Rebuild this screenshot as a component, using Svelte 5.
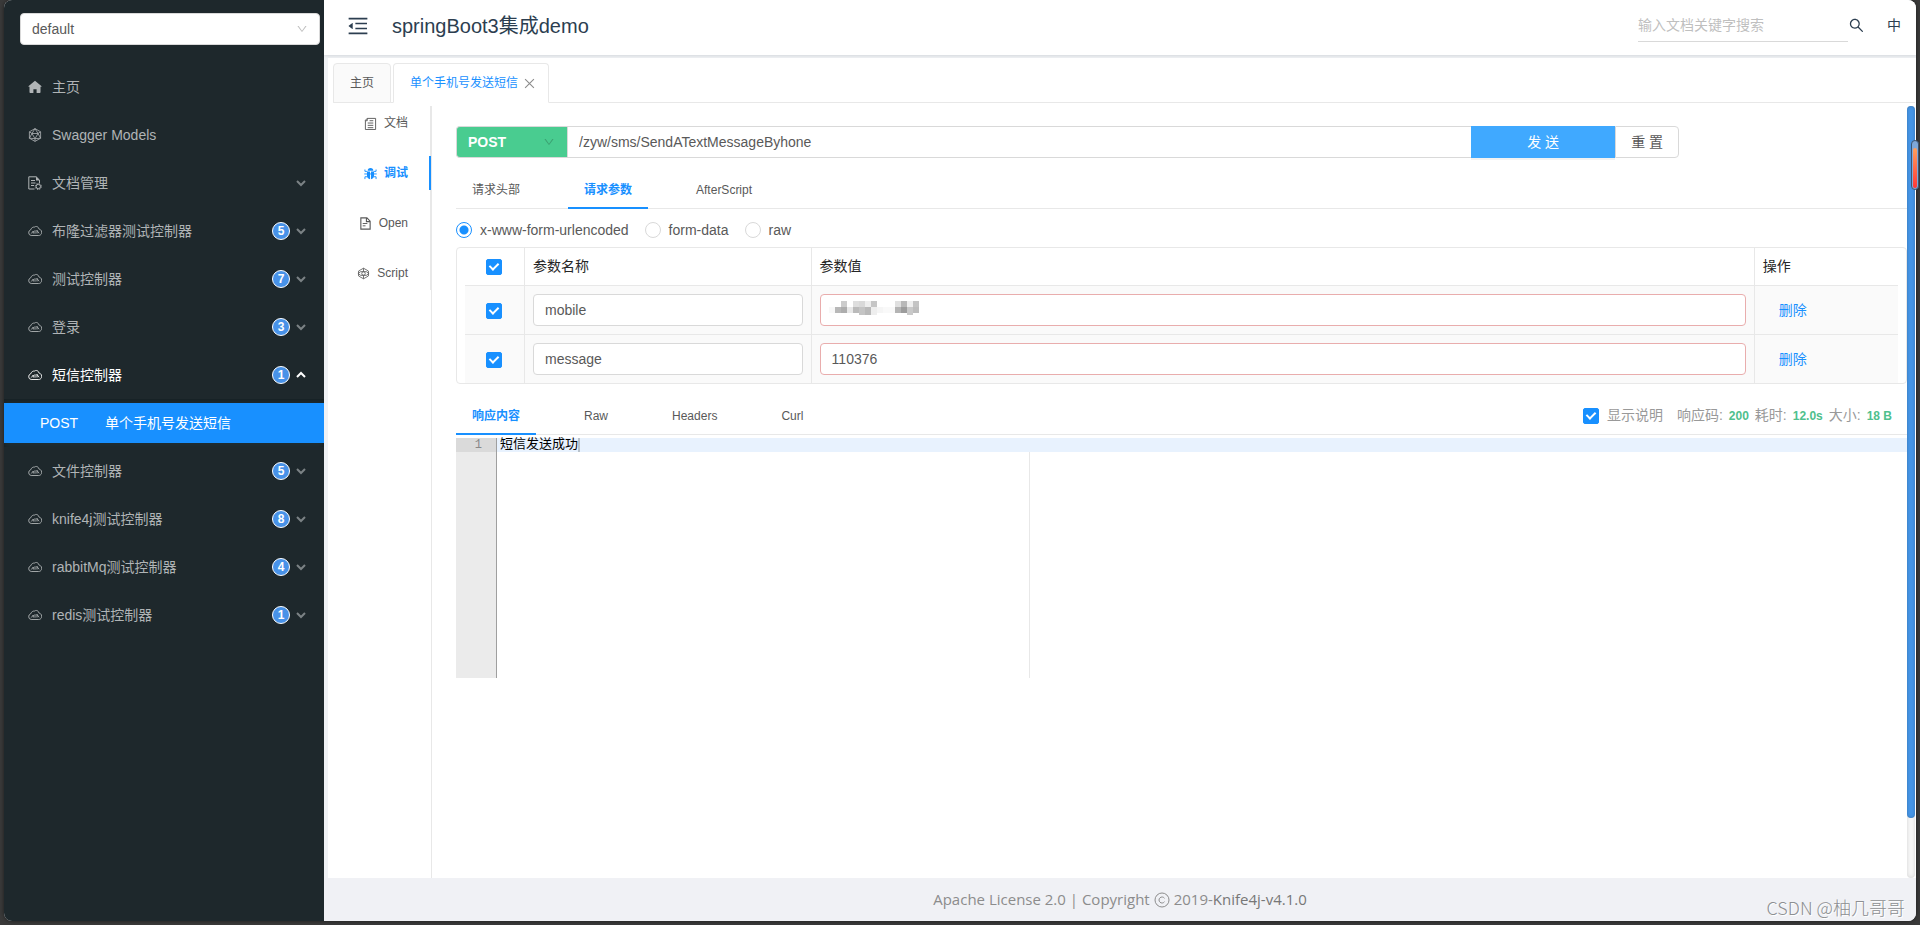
<script>
	const menus = [
		{ title: '主页', icon: 'home' },
		{ title: 'Swagger Models', icon: 'model' },
		{ title: '文档管理', icon: 'docset', arrow: true },
		{ title: '布隆过滤器测试控制器', icon: 'cloud', count: 5, arrow: true },
		{ title: '测试控制器', icon: 'cloud', count: 7, arrow: true },
		{ title: '登录', icon: 'cloud', count: 3, arrow: true },
		{
			title: '短信控制器',
			icon: 'cloud',
			count: 1,
			arrow: true,
			open: true,
			children: [{ method: 'POST', title: '单个手机号发送短信' }]
		},
		{ title: '文件控制器', icon: 'cloud', count: 5, arrow: true },
		{ title: 'knife4j测试控制器', icon: 'cloud', count: 8, arrow: true },
		{ title: 'rabbitMq测试控制器', icon: 'cloud', count: 4, arrow: true },
		{ title: 'redis测试控制器', icon: 'cloud', count: 1, arrow: true }
	];

	const sideTabs = [
		{ title: '文档', icon: 'doc' },
		{ title: '调试', icon: 'bug' },
		{ title: 'Open', icon: 'file' },
		{ title: 'Script', icon: 'script' }
	];

	const requestTabs = ['请求头部', '请求参数', 'AfterScript'];
	const responseTabs = ['响应内容', 'Raw', 'Headers', 'Curl'];
	const bodyTypes = ['x-www-form-urlencoded', 'form-data', 'raw'];

	const stats = [
		{ label: '响应码:', value: '200' },
		{ label: '耗时:', value: '12.0s' },
		{ label: '大小:', value: '18 B' }
	];

	// masked value, 6px blocks: x, y, height, colour
	const mask = [
		[0, 6, 6, '#f8f8f8'],
		[6, 6, 6, '#b8b8b8'],
		[12, 0, 6, '#cccccc'],
		[12, 6, 6, '#adadad'],
		[18, 6, 6, '#e8e8e8'],
		[24, 0, 6, '#dedede'],
		[24, 6, 6, '#bababa'],
		[30, 0, 6, '#d9d9d9'],
		[30, 6, 8, '#c4c4c4'],
		[36, 0, 6, '#eeeeee'],
		[36, 6, 8, '#b9b9b9'],
		[42, 0, 6, '#c6c6c6'],
		[42, 6, 8, '#eeeeee'],
		[48, 6, 6, '#f5f5f5'],
		[54, 6, 6, '#f9f9f9'],
		[60, 6, 6, '#f9f9f9'],
		[66, 0, 6, '#e0e0e0'],
		[66, 6, 6, '#b4b4b4'],
		[72, 0, 6, '#b8b8b8'],
		[72, 6, 6, '#9c9c9c'],
		[78, 0, 6, '#efefef'],
		[78, 6, 8, '#c9c9c9'],
		[84, 0, 6, '#c4c4c4'],
		[84, 6, 6, '#bdbdbd']
	];

	let params = $state([
		{ name: 'mobile', value: '', masked: true, checked: true },
		{ name: 'message', value: '110376', masked: false, checked: true }
	]);

	let sideTab = $state('调试');
	let requestTab = $state('请求参数');
	let responseTab = $state('响应内容');
	let bodyType = $state('x-www-form-urlencoded');
	let url = $state('/zyw/sms/SendATextMessageByhone');
	let allChecked = $state(true);
	let showDesc = $state(true);

	function toggleAll() {
		params.forEach((p) => (p.checked = allChecked));
	}

	function remove(param) {
		params = params.filter((p) => p !== param);
	}
</script>

{#snippet down()}
	<svg class="down" viewBox="0 0 1024 1024" aria-hidden="true">
		<path
			d="M884 256h-75c-5.1 0-9.9 2.5-12.9 6.6L512 654.2 227.9 262.6c-3-4.1-7.8-6.6-12.9-6.6h-75c-6.5 0-10.3 7.4-6.5 12.7l352.6 486.1c12.8 17.6 39 17.6 51.7 0l352.6-486.1c3.9-5.3.1-12.7-6.4-12.7z"
		/>
	</svg>
{/snippet}

{#snippet icon(name)}
	<svg class="icon" viewBox="0 0 14 14" aria-hidden="true">
		{#if name === 'home'}
			<path
				fill="currentColor"
				d="M7 .8 13.3 6a.4.4 0 0 1-.3.8h-.5v5.4c0 .5-.3.8-.8.8H8.6V9.2H5.4V13H2.3c-.5 0-.8-.3-.8-.8V6.8H1A.4.4 0 0 1 .7 6z"
			/>
		{:else if name === 'model'}
			<g fill="none" stroke="currentColor" stroke-width=".8">
				<path d="M7 .6 12.6 3.8v6.4L7 13.4 1.4 10.2V3.8z" />
				<path d="M7 .6 4 5.5h6zM4 5.5 1.4 3.8M10 5.5l2.6-1.7M4 5.5l3 5.2 3-5.2M7 10.7v2.7M4 5.5l-2.6 4.7 5.6.5 5.6-.5L10 5.5" />
			</g>
		{:else if name === 'docset'}
			<g fill="none" stroke="currentColor">
				<path d="M6.5 13H.8V.8h7.4l3.3 3.3V7" />
				<path d="M3 4.5h4M3 7h4.5M3 9.5h3" />
				<circle cx="10.3" cy="10.5" r="2.2" />
				<circle cx="10.3" cy="10.5" r="3.1" stroke-dasharray="1.2 1.23" />
			</g>
			<path fill="currentColor" d="M8 .5v4h4z" />
		{:else if name === 'cloud'}
			<path
				fill="none"
				stroke="currentColor"
				stroke-width=".9"
				d="M3.2 11.5a2.9 2.9 0 0 1-.6-5.6C3.3 3.8 5 2.9 6.7 3c.9-.9 3.7-.8 4.1 1.8 2.7.9 3.3 3 2.7 4.6-.5 1.500-1.7 2.1-2.8 2.1z"
			/>
			<path fill="none" stroke="currentColor" stroke-width=".9" d="M3.3 9.5 5.3 7v2.5M7 9.7V6.200M9 6v3.5M9 6.5l2 2.8" />
		{:else if name === 'doc'}
			<path fill="none" stroke="currentColor" d="M3.5 1.5h9v12h-11V3.5zM1.5 4h2V1.5M4 6.5h6M4 9h6M4 11.500h6M6 4h4" />
		{:else if name === 'bug'}
			<path
				fill="currentColor"
				d="M4 4a3 3 0 0 1 6 0zM3.2 4.8h3.3v8.4C4.5 13 3.2 11.5 3.2 9.5zM7.5 4.8h3.3v4.7c0 2-1.3 3.5-3.3 3.7z"
			/>
			<path fill="none" stroke="currentColor" d="M.3 7.5h13.4M1 2.700v2h2.5M13 2.700v2h-2.5M1 13v-2.500h2.500M13 13v-2.500h-2.500" />
		{:else if name === 'file'}
			<path fill="none" stroke="currentColor" stroke-width="1.2" d="M2 1h6.5L12 4.5V13H2zM8 1v4h4" />
			<path fill="none" stroke="currentColor" d="M4 7h5M4 9.500h3" />
		{:else if name === 'script'}
			<g fill="none" stroke="currentColor" stroke-width=".9">
				<path d="M7 1.3 12.3 4.3v5.4L7 12.7 1.7 9.7V4.3z" />
				<path d="M1 7 4 5h6l3 2-3 2H4z" />
				<circle cx="7" cy="7" r="1.9" />
				<path d="M7 1.3v3.500M7 9.200v3.500" />
			</g>
		{/if}
	</svg>
{/snippet}

{#snippet lineTabs(tabs, active, select)}
	<div class="line-tabs" role="tablist">
		{#each tabs as tab}
			<button role="tab" class:active={tab === active} aria-selected={tab === active} onclick={() => select(tab)}>
				{tab}
			</button>
		{/each}
	</div>
{/snippet}

<div class="desktop">
	<div class="window">
		<aside class="sider">
			<div class="group select">
				<select aria-label="group">
					<option>default</option>
				</select>
				{@render down()}
			</div>

			<nav>
				{#each menus as menu}
					<button class="menu" class:open={menu.open}>
						{@render icon(menu.icon)}
						<span class="title">{menu.title}</span>
						{#if menu.count}
							<span class="badge">{menu.count}</span>
						{/if}
						{#if menu.arrow}
							<svg class="arrow" viewBox="0 0 10 10" aria-hidden="true">
								<path d="M1 3l4 4 4-4" />
							</svg>
						{/if}
					</button>
					{#if menu.children}
						<div class="submenu">
							{#each menu.children as child}
								<a href="#sms"><span class="method">{child.method}</span>{child.title}</a>
							{/each}
						</div>
					{/if}
				{/each}
			</nav>
		</aside>

		<main>
			<header>
				<button class="fold" aria-label="menu">
					<svg viewBox="0 0 1024 1024" aria-hidden="true">
						<path
							d="M408 442h480c4.4 0 8-3.6 8-8v-56c0-4.4-3.6-8-8-8H408c-4.4 0-8 3.6-8 8v56c0 4.4 3.6 8 8 8zm-8 204c0 4.4 3.6 8 8 8h480c4.4 0 8-3.6 8-8v-56c0-4.4-3.6-8-8-8H408c-4.4 0-8 3.6-8 8v56zm504-486H120c-4.4 0-8 3.6-8 8v56c0 4.4 3.6 8 8 8h784c4.4 0 8-3.6 8-8v-56c0-4.4-3.6-8-8-8zm0 632H120c-4.4 0-8 3.6-8 8v56c0 4.4 3.6 8 8 8h784c4.4 0 8-3.6 8-8v-56c0-4.4-3.6-8-8-8zM115.4 518.9L271.7 642c5.8 4.6 14.4.5 14.4-6.9V388.9c0-7.4-8.5-11.5-14.4-6.9L115.4 505.1a8.74 8.74 0 0 0 0 13.8z"
						/>
					</svg>
				</button>
				<h1>springBoot3集成demo</h1>
				<input class="search" type="text" aria-label="search" placeholder="输入文档关键字搜索" />
				<button class="search-btn" aria-label="search">
					<svg viewBox="0 0 1024 1024" aria-hidden="true">
						<path
							d="M909.6 854.5L649.9 594.8C690.2 542.7 712 479 712 412c0-80.2-31.3-155.4-87.9-212.1-56.6-56.7-132-87.9-212.1-87.9s-155.5 31.3-212.1 87.9C143.2 256.5 112 331.8 112 412c0 80.1 31.3 155.5 87.9 212.1C256.5 680.8 331.8 712 412 712c67 0 130.6-21.8 182.7-62l259.7 259.6a8.2 8.2 0 0 0 11.6 0l43.6-43.5a8.2 8.2 0 0 0 0-11.6zM570.4 570.4C528 612.7 471.8 636 412 636s-116-23.3-158.4-65.6C211.3 528 188 471.8 188 412s23.3-116.1 65.6-158.4C296 211.3 352.2 188 412 188s116.1 23.2 158.4 65.6S636 352.2 636 412s-23.3 116.1-65.6 158.4z"
						/>
					</svg>
				</button>
				<button class="lang">中</button>
			</header>

			<div class="page">
				<div class="card-tabs" role="tablist">
					<button role="tab" aria-selected="false">主页</button>
					<button role="tab" class="active" aria-selected="true">
						单个手机号发送短信
						<svg viewBox="0 0 10 10" aria-hidden="true"><path d="M1 1l8 8M9 1 1 9" /></svg>
					</button>
				</div>

				<div class="body">
					<div class="side-tabs" role="tablist">
						{#each sideTabs as tab}
							<button
								role="tab"
								class:active={tab.title === sideTab}
								aria-selected={tab.title === sideTab}
								onclick={() => (sideTab = tab.title)}
							>
								{@render icon(tab.icon)}
								{tab.title}
							</button>
						{/each}
					</div>

					<section class="debug">
						<div class="request">
							<div class="post select">
								<select aria-label="method">
									<option>POST</option>
								</select>
								{@render down()}
							</div>
							<input class="url" type="text" aria-label="url" bind:value={url} />
							<button class="send">发 送</button>
							<button class="reset">重 置</button>
						</div>

						{@render lineTabs(requestTabs, requestTab, (t) => (requestTab = t))}

						<div class="radios">
							{#each bodyTypes as type}
								<label><input type="radio" name="body" value={type} bind:group={bodyType} />{type}</label>
							{/each}
						</div>

						<div class="params">
							<table>
								<thead>
									<tr>
										<th class="check">
											<input type="checkbox" aria-label="all" bind:checked={allChecked} onchange={toggleAll} />
										</th>
										<th class="name">参数名称</th>
										<th>参数值</th>
										<th class="action">操作</th>
									</tr>
								</thead>
								<tbody>
									{#each params as param}
										<tr>
											<td class="check"><input type="checkbox" aria-label={param.name} bind:checked={param.checked} /></td>
											<td><input class="text" type="text" aria-label="name" bind:value={param.name} /></td>
											<td>
												<div class="value">
													<input class="text required" type="text" aria-label="value" bind:value={param.value} />
													{#if param.masked}
														<svg class="mask" viewBox="0 0 90 14" aria-hidden="true">
															{#each mask as [x, y, h, fill]}
																<rect {x} {y} width="6" height={h} {fill} />
															{/each}
														</svg>
													{/if}
												</div>
											</td>
											<td><button class="link" onclick={() => remove(param)}>删除</button></td>
										</tr>
									{/each}
								</tbody>
							</table>
						</div>

						<div class="response-bar">
							{@render lineTabs(responseTabs, responseTab, (t) => (responseTab = t))}
							<div class="stats">
								<label><input type="checkbox" bind:checked={showDesc} />显示说明</label>
								{#each stats as stat}
									<span>{stat.label}</span>
									<strong>{stat.value}</strong>
								{/each}
							</div>
						</div>

						<div class="editor">
							<div class="gutter"><span>1</span></div>
							<div class="code">
								<div class="line">短信发送成功<i class="cursor"></i></div>
								<div class="margin"></div>
							</div>
						</div>
					</section>

					<div class="scrollbar"><div class="thumb"></div></div>
				</div>
			</div>

			<footer>
				<span>Apache License 2.0 | Copyright</span>
				<svg viewBox="0 0 16 16" aria-hidden="true">
					<circle cx="8" cy="8" r="7" />
					<path d="M10.5 6.3A3 3 0 1 0 10.5 9.7" />
				</svg>
				<span>2019-<b>Knife4j-v4.1.0</b></span>
			</footer>
		</main>
	</div>

	<div class="edge-widget"><div></div></div>
	<div class="watermark">CSDN @柚几哥哥</div>
</div>

<style>
	:global(body) {
		margin: 0;
		background: #3a3a3a;
		font-family: 'Liberation Sans', 'Noto Sans CJK SC', sans-serif;
		font-size: 14px;
		line-height: 1.5;
		color: #595959;
	}

	.desktop {
		position: relative;
		box-sizing: border-box;
		display: flex;
		min-height: 100vh;
		padding: 0 4px 4px;
		overflow: hidden;
	}

	.window {
		flex: 1;
		display: flex;
		min-width: 0;
		background: #f0f2f5;
		border-radius: 8px;
		overflow: hidden;
		box-shadow: 0 0 4px rgba(0, 0, 0, 0.5);
	}

	button,
	input,
	select {
		box-sizing: border-box;
		margin: 0;
		font-family: inherit;
		font-size: 14px;
		line-height: inherit;
		color: inherit;
	}

	button {
		padding: 0;
		border: none;
		background: none;
		cursor: pointer;
	}

	select {
		appearance: none;
		width: 100%;
		height: 32px;
		padding: 0 11px;
		border: 1px solid #d9d9d9;
		border-radius: 4px;
		background: #fff;
	}

	.select {
		position: relative;
	}

	.down {
		position: absolute;
		top: 10px;
		right: 12px;
		width: 12px;
		height: 12px;
		fill: #bfbfbf;
		pointer-events: none;
	}

	.icon {
		flex: none;
		width: 14px;
		height: 14px;
	}

	/* sider */
	.sider {
		flex: none;
		width: 320px;
		background: #1e282c;
		color: #b0b4b6;
	}

	.group {
		margin: 13px 4px 18px 16px;
		color: #595959;
	}

	.menu {
		display: flex;
		align-items: center;
		width: 100%;
		height: 48px;
		padding: 0 18px 0 24px;
		text-align: left;
	}

	.menu.open {
		color: #fff;
	}

	.title {
		flex: 1;
		margin-left: 10px;
	}

	.badge {
		box-sizing: border-box;
		width: 18px;
		height: 18px;
		margin-right: 6px;
		border: 1px solid #fff;
		border-radius: 9px;
		background: #4892e8;
		color: #fff;
		font-size: 12px;
		font-weight: bold;
		line-height: 16px;
		text-align: center;
	}

	.arrow {
		width: 10px;
		height: 10px;
		fill: none;
		stroke: #7b8285;
		stroke-width: 2;
	}

	.open .arrow {
		stroke: #fff;
		transform: rotate(180deg);
	}

	.submenu {
		padding: 4px 0;
		background: #1f2d32;
		box-shadow: inset 0 2px 6px rgba(0, 0, 0, 0.35);
	}

	.submenu a {
		display: flex;
		align-items: center;
		height: 40px;
		padding-left: 36px;
		background: #1890ff;
		color: #fff;
		text-decoration: none;
	}

	.method {
		width: 65px;
	}

	/* header */
	main {
		flex: 1;
		display: flex;
		flex-direction: column;
		min-width: 0;
	}

	header {
		display: flex;
		align-items: center;
		height: 55px;
		padding: 0 15px 4px 22px;
		box-sizing: border-box;
		background: #fff;
		box-shadow: 0 1px 3px rgba(0, 21, 41, 0.12);
		color: #2c3e50;
	}

	header svg {
		display: block;
		fill: #2c3e50;
	}

	.fold svg {
		width: 24px;
		height: 24px;
	}

	h1 {
		flex: 1;
		margin: 0 0 0 22px;
		font-size: 20px;
		font-weight: normal;
	}

	.search {
		width: 210px;
		height: 32px;
		padding: 0;
		border: none;
		border-bottom: 1px solid #d9d9d9;
		outline: none;
	}

	.search::placeholder {
		color: #bfbfbf;
	}

	.search-btn svg {
		width: 17px;
		height: 17px;
	}

	.lang {
		margin-left: 22px;
	}

	.page {
		flex: 1;
		display: flex;
		flex-direction: column;
		margin: 3px 0 0 4px;
		background: #fff;
	}

	.card-tabs {
		display: flex;
		gap: 2px;
		margin: 5px 1px 3px 5px;
		box-shadow: inset 0 -1px #e8e8e8;
	}

	.card-tabs button {
		display: flex;
		align-items: center;
		gap: 6px;
		height: 40px;
		padding: 0 16px;
		border: 1px solid #e8e8e8;
		border-radius: 4px 4px 0 0;
		background: #fafafa;
		font-size: 12px;
	}

	.card-tabs .active {
		padding-right: 13px;
		border-bottom-color: #fff;
		background: #fff;
		color: #1890ff;
	}

	.card-tabs svg {
		width: 11px;
		height: 11px;
		fill: none;
		stroke: #8c8c8c;
	}

	.body {
		flex: 1;
		display: flex;
	}

	.side-tabs {
		flex: none;
		align-self: flex-start;
		display: flex;
		flex-direction: column;
		gap: 16px;
		box-sizing: border-box;
		width: 103px;
		border-right: 1px solid #e8e8e8;
	}

	.side-tabs button {
		display: flex;
		align-items: center;
		justify-content: flex-end;
		gap: 7px;
		height: 34px;
		margin-right: -1px;
		padding-right: 21px;
		border-right: 2px solid transparent;
		font-size: 12px;
	}

	.side-tabs .active {
		border-color: #1890ff;
		color: #1890ff;
		font-weight: bold;
	}

	.side-tabs .icon {
		width: 13px;
		height: 13px;
	}

	.debug {
		flex: 1;
		min-width: 0;
		padding: 20px 0 0 24px;
		border-left: 1px solid #e8e8e8;
	}

	.request {
		display: grid;
		grid-template-columns: 111px 1fr 144px 64px;
		width: 84.3%;
		margin-bottom: 12px;
	}

	.post select {
		border-radius: 4px 0 0 4px;
		border-right: none;
		background: #49cc90;
		color: #fff;
		font-weight: bold;
	}

	.post .down {
		fill: #3ba272;
	}

	.url {
		height: 32px;
		padding: 0 11px;
		border: 1px solid #d9d9d9;
		border-right: none;
		outline: none;
		min-width: 0;
	}

	.send {
		background: #40a9ff;
		color: #fff;
		box-shadow: 0 2px rgba(0, 0, 0, 0.05);
	}

	.reset {
		border: 1px solid #d9d9d9;
		border-radius: 0 4px 4px 0;
		background: #fff;
	}

	.line-tabs {
		display: flex;
		gap: 32px;
		flex: 1;
		box-shadow: inset 0 -1px #e8e8e8;
	}

	.line-tabs button {
		height: 39px;
		padding: 2px 16px 0;
		border-bottom: 2px solid transparent;
		font-size: 12px;
	}

	.line-tabs .active {
		border-color: #1890ff;
		color: #1890ff;
		font-weight: bold;
	}

	.radios {
		display: flex;
		gap: 16px;
		padding: 10px 0 6px;
	}

	.radios label {
		display: flex;
		align-items: center;
		gap: 8px;
		height: 22px;
	}

	input[type='radio'] {
		appearance: none;
		width: 16px;
		height: 16px;
		border: 1px solid #d9d9d9;
		border-radius: 50%;
		background: #fff;
	}

	input[type='radio']:checked {
		border-color: #1890ff;
		background: radial-gradient(#1890ff 4px, #fff 5px);
	}

	input[type='checkbox'] {
		appearance: none;
		display: inline-grid;
		place-items: center;
		width: 16px;
		height: 16px;
		border: 1px solid #d9d9d9;
		border-radius: 2px;
		vertical-align: middle;
	}

	input[type='checkbox']:checked {
		border-color: #1890ff;
		background: #1890ff;
	}

	input[type='checkbox']:checked::after {
		content: '';
		width: 4px;
		height: 7px;
		margin-bottom: 3px;
		border: solid #fff;
		border-width: 0 2px 2px 0;
		transform: rotate(45deg);
	}

	/* params */
	.params {
		padding: 0 8px;
		border: 1px solid #e8e8e8;
		border-radius: 4px;
	}

	table {
		width: 100%;
		table-layout: fixed;
		border-collapse: separate;
		border-spacing: 0;
	}

	th,
	td {
		box-sizing: border-box;
		padding: 0 8px;
		border-right: 1px solid #e8e8e8;
		border-bottom: 1px solid #e8e8e8;
		text-align: left;
	}

	th {
		height: 38px;
		color: #262626;
		font-weight: normal;
	}

	td {
		height: 49px;
		background: #fafafa;
	}

	th:last-child,
	td:last-child {
		border-right: none;
	}

	tr:last-child td {
		height: 48px;
		border-bottom: none;
	}

	.check {
		width: 60px;
		padding-right: 9px;
		text-align: center;
	}

	th.name {
		width: 20%;
	}

	th.action {
		width: 10%;
	}

	.text {
		display: block;
		width: 100%;
		height: 32px;
		padding: 0 11px;
		border: 1px solid #d9d9d9;
		border-radius: 4px;
		background: #fff;
		outline: none;
	}

	.required {
		border-color: #e9adad;
	}

	.value {
		position: relative;
	}

	.mask {
		position: absolute;
		top: 7px;
		left: 9px;
		width: 90px;
		height: 14px;
		shape-rendering: crispEdges;
	}

	.link {
		margin-left: 16px;
		color: #1890ff;
	}

	/* response */
	.response-bar {
		display: flex;
		margin: 12px 0 3px;
	}

	.stats {
		display: flex;
		align-items: center;
		gap: 6px;
		padding-right: 15px;
		box-shadow: inset 0 -1px #e8e8e8;
		color: #999;
	}

	.stats label {
		display: flex;
		align-items: center;
		gap: 8px;
		margin-right: 8px;
	}

	.stats strong {
		color: #4fc08d;
		font-size: 12px;
	}

	.editor {
		display: flex;
		height: 240px;
		font-family: 'Liberation Mono', 'Noto Sans CJK SC', monospace;
		font-size: 13px;
		line-height: 14px;
	}

	.gutter {
		width: 40px;
		border-right: 1px solid #9f9f9f;
		background: #ebebeb;
		color: #888;
		font-size: 12px;
		text-align: right;
	}

	.gutter span {
		display: block;
		padding-right: 14px;
		background: #dadada;
	}

	.code {
		flex: 1;
		display: flex;
		flex-direction: column;
	}

	.line {
		display: flex;
		height: 14px;
		padding-left: 3px;
		background: #e8f2fe;
		color: #000;
	}

	.cursor {
		width: 2px;
		background: #b8c2cb;
	}

	.margin {
		flex: 1;
		width: 532px;
		border-right: 1px solid #e8e8e8;
	}

	.scrollbar {
		flex: none;
		width: 8px;
		margin-right: 1px;
		border-radius: 4px;
		background: #f7f7f7;
		box-shadow: inset 0 0 4px rgba(0, 0, 0, 0.15);
	}

	.thumb {
		height: 92.2%;
		border-radius: 4px;
		background: #4595e6;
		box-shadow: inset 0 0 3px rgba(0, 0, 0, 0.25);
	}

	footer {
		display: flex;
		align-items: center;
		justify-content: center;
		gap: 4px;
		height: 43px;
		background: #f0f1f5;
		color: #8c8c8c;
		font-family: 'Open Sans', sans-serif;
		font-size: 15px;
	}

	footer svg {
		width: 16px;
		height: 16px;
		fill: none;
		stroke: #8c8c8c;
	}

	footer b {
		color: #777;
		font-weight: normal;
	}

	.edge-widget {
		position: absolute;
		top: 140px;
		right: 1px;
		box-sizing: border-box;
		width: 8px;
		height: 50px;
		padding: 7px 1px 1px;
		border: 1px solid #3d5570;
		border-radius: 4px;
		background: #7fa8d8;
	}

	.edge-widget div {
		height: 100%;
		border-radius: 2px;
		background: linear-gradient(#ffa05c, #ff3838);
	}

	.watermark {
		position: absolute;
		right: 15px;
		bottom: 4px;
		color: #8d8f92;
		font-family: 'Noto Sans CJK SC', sans-serif;
		font-size: 18px;
		font-weight: 300;
		line-height: 28px;
		text-shadow: 1px 1px #fff;
	}
</style>
